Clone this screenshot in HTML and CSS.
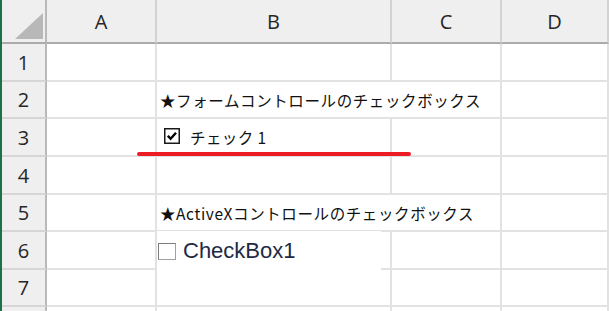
FILE: index.html
```html
<!DOCTYPE html>
<html lang="ja">
<head>
    <meta charset="UTF-8" />
    <title>チェックボックス</title>
    <link rel="stylesheet" href="styles.css">
</head>
<body>
<div class="sheet">
    <div class="corner">
        <svg width="28" height="26" viewBox="0 0 28 26"><polygon points="28,0 28,26 0,26" fill="#b8b8b8"/></svg>
    </div>
    <div class="col-head">A</div>
    <div class="col-head">B</div>
    <div class="col-head">C</div>
    <div class="col-head">D</div>

    <div class="row-head">1</div>
    <div class="cell"></div><div class="cell"></div><div class="cell"></div><div class="cell"></div>

    <div class="row-head">2</div>
    <div class="cell"></div>
    <div class="cell spill"><span class="jp">★フォームコントロールのチェックボックス</span></div>
    <div class="cell"></div><div class="cell"></div>

    <div class="row-head">3</div>
    <div class="cell"></div>
    <div class="cell form-check">
        <svg class="box" width="16" height="16" viewBox="0 0 16 16">
            <rect x="0.75" y="0.75" width="14.5" height="14.5" fill="#fff" stroke="#1a1a1a" stroke-width="1.5"/>
            <path d="M3.8 7.8 L6.6 10.8 L12 4.8" fill="none" stroke="#000" stroke-width="2.4"/>
        </svg>
        <span class="check-label">チェック 1</span>
    </div>
    <div class="cell"></div><div class="cell"></div>

    <div class="row-head">4</div>
    <div class="cell"></div><div class="cell"></div><div class="cell"></div><div class="cell"></div>

    <div class="row-head">5</div>
    <div class="cell"></div>
    <div class="cell spill"><span class="jp">★ActiveXコントロールのチェックボックス</span></div>
    <div class="cell"></div><div class="cell"></div>

    <div class="row-head">6</div>
    <div class="cell"></div><div class="cell"></div><div class="cell"></div><div class="cell"></div>

    <div class="row-head">7</div>
    <div class="cell"></div><div class="cell"></div><div class="cell"></div><div class="cell"></div>

    <div class="row-head"></div>
    <div class="cell"></div><div class="cell"></div><div class="cell"></div><div class="cell"></div>

    <!-- annotation + ActiveX control float over the grid -->
    <div class="marker"></div>
    <div class="activex">
        <span class="ax-box"></span>
        <span class="ax-label">CheckBox1</span>
    </div>
</div>
</body>
</html>
```

FILE: styles.css
```css
body {
    margin: 0;
    width: 609px;
    height: 311px;
    overflow: hidden;
    background: #fff;
    border-left: 2px solid #1e7145;
    box-sizing: border-box;
    font-family: "Open Sans", "Liberation Sans", sans-serif;
}
.sheet {
    position: relative;
    display: grid;
    grid-template-columns: 45px 110px 235px 110px 1fr;
    grid-template-rows: 44px 38px 37px 38px 38px 37px 38px 37px 38px;
}
.corner, .col-head, .row-head, .cell {
    box-sizing: border-box;
}
.corner {
    background: #efefef;
    border-right: 2px solid #b9b9b9;
    border-bottom: 2px solid #ababab;
    display: flex;
    justify-content: flex-end;
    align-items: flex-end;
    padding: 0 2px 3px 0;
}
.col-head {
    background: #efefef;
    border-right: 2px solid #d2d2d2;
    border-bottom: 2px solid #ababab;
    display: flex;
    align-items: center;
    justify-content: center;
    font-size: 20px;
    color: #262626;
    padding-top: 1px;
}
.row-head {
    background: #efefef;
    border-right: 2px solid #b9b9b9;
    border-bottom: 2px solid #d6d6d6;
    display: flex;
    align-items: center;
    justify-content: center;
    font-size: 20px;
    color: #262626;
}
.cell {
    border-right: 2px solid #e2e2e2;
    border-bottom: 2px solid #e2e2e2;
    display: flex;
    align-items: center;
    padding-left: 3px;
    white-space: nowrap;
}
.cell.spill {
    border-right: none;
}
.jp {
    font-family: "Noto Sans CJK JP", sans-serif;
    font-size: 15.5px;
    letter-spacing: 0.6px;
    color: #111;
}
.form-check {
    padding-left: 7px;
    gap: 10px;
}
.form-check .box {
    margin-bottom: 3px;
}
.check-label {
    font-family: "Noto Sans CJK JP", sans-serif;
    font-size: 15.5px;
    letter-spacing: 0.4px;
    color: #111;
}
.marker {
    position: absolute;
    left: 135px;
    top: 152px;
    width: 274px;
    height: 4px;
    border-radius: 2px;
    background: #ec1c24;
}
.activex {
    position: absolute;
    left: 155px;
    top: 231px;
    width: 224px;
    height: 40px;
    background: #fff;
    display: flex;
    align-items: center;
    padding-left: 1px;
    box-sizing: border-box;
}
.ax-box {
    width: 18px;
    height: 17px;
    box-sizing: border-box;
    border: 1px solid #a0a0a0;
    border-top-color: #7c7c7c;
    border-left-color: #7c7c7c;
    background: #fff;
}
.ax-label {
    margin-left: 7px;
    font-family: "Liberation Sans", sans-serif;
    font-size: 22px;
    color: #1e2a44;
}
```
